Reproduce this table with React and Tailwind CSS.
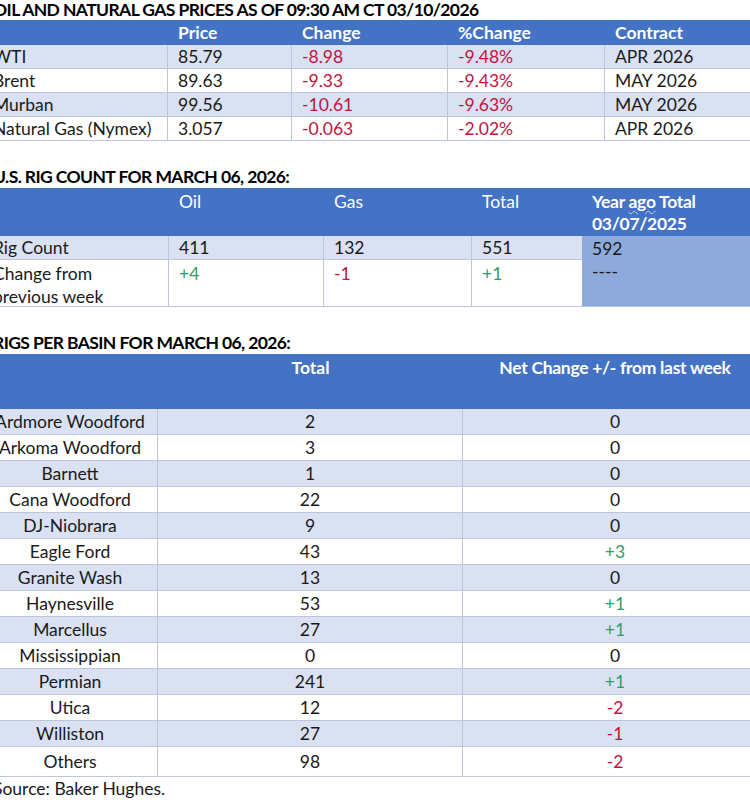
import React from "react";

const prices = [
  { name: "WTI", price: "85.79", change: "-8.98", pct: "-9.48%", contract: "APR 2026" },
  { name: "Brent", price: "89.63", change: "-9.33", pct: "-9.43%", contract: "MAY 2026" },
  { name: "Murban", price: "99.56", change: "-10.61", pct: "-9.63%", contract: "MAY 2026" },
  { name: "Natural Gas (Nymex)", price: "3.057", change: "-0.063", pct: "-2.02%", contract: "APR 2026" },
];

const basins = [
  ["Ardmore Woodford", "2", "0"],
  ["Arkoma Woodford", "3", "0"],
  ["Barnett", "1", "0"],
  ["Cana Woodford", "22", "0"],
  ["DJ-Niobrara", "9", "0"],
  ["Eagle Ford", "43", "+3"],
  ["Granite Wash", "13", "0"],
  ["Haynesville", "53", "+1"],
  ["Marcellus", "27", "+1"],
  ["Mississippian", "0", "0"],
  ["Permian", "241", "+1"],
  ["Utica", "12", "-2"],
  ["Williston", "27", "-1"],
  ["Others", "98", "-2"],
];

function changeColor(v) {
  if (v.startsWith("+")) return "text-[#2f9d6a]";
  if (v.startsWith("-")) return "text-[#c0143c]";
  return "text-[#1a1a1a]";
}

export default function App() {
  return (
    <div className="w-[750px] h-[800px] overflow-hidden bg-white font-['Lato',sans-serif] text-[17.5px] text-[#1a1a1a]">
      <div className="-ml-[17px] w-[784px]">
        {/* Prices */}
        <div className="h-[20px] pl-[10px] text-[17.5px] font-bold leading-[20px] tracking-[-0.6px] text-black">
          OIL AND NATURAL GAS PRICES AS OF 09:30 AM CT 03/10/2026
        </div>
        <div className="grid grid-cols-[185px_124px_156px_157px_162px]">
          <div className="h-[25px] bg-[#4472c4]" />
          {["Price", "Change", "%Change", "Contract"].map((h) => (
            <div key={h} className="flex h-[25px] items-center bg-[#4472c4] pl-[10px] pt-[2px] font-bold text-white">
              {h}
            </div>
          ))}
          {prices.map((r, i) => {
            const bg = i % 2 === 0 ? "bg-[#d9e1f2]" : "bg-white";
            const cell = `flex h-[24px] items-center pl-[10px] pt-[2px] border-b border-[#bcc6d8] ${bg}`;
            return (
              <React.Fragment key={r.name}>
                <div className={`${cell} border-r`}>{r.name}</div>
                <div className={`${cell} border-r`}>{r.price}</div>
                <div className={`${cell} border-r text-[#c0143c]`}>{r.change}</div>
                <div className={`${cell} border-r text-[#c0143c]`}>{r.pct}</div>
                <div className={cell}>{r.contract}</div>
              </React.Fragment>
            );
          })}
        </div>

        {/* Rig count */}
        <div className="flex h-[47px] items-end pb-[1px] pl-[10px] text-[17.5px] font-bold leading-[20px] tracking-[-0.6px] text-black">
          U.S. RIG COUNT FOR MARCH 06, 2026:
        </div>
        <div className="grid grid-cols-[186px_155px_148px_110px_185px]">
          <div className="h-[48px] bg-[#4472c4]" />
          <div className="h-[48px] bg-[#4472c4] pl-[10px] pt-[3px] leading-[22px] text-white">Oil</div>
          <div className="h-[48px] bg-[#4472c4] pl-[10px] pt-[3px] leading-[22px] text-white">Gas</div>
          <div className="h-[48px] bg-[#4472c4] pl-[10px] pt-[3px] leading-[22px] text-white">Total</div>
          <div className="h-[48px] bg-[#4472c4] pl-[10px] pt-[3px] font-bold leading-[22px] tracking-[-0.3px] text-white">
            Year <span className="underline decoration-wavy decoration-[#c6d2ea] decoration-1 underline-offset-2">ago</span> Total
            <br />
            03/07/2025
          </div>

          <div className="flex h-[24px] items-center border-b border-r border-[#bcc6d8] bg-[#d9e1f2] pl-[10px] pt-[2px]">Rig Count</div>
          <div className="flex h-[24px] items-center border-b border-r border-[#bcc6d8] bg-[#d9e1f2] pl-[10px] pt-[2px]">411</div>
          <div className="flex h-[24px] items-center border-b border-r border-[#bcc6d8] bg-[#d9e1f2] pl-[10px] pt-[2px]">132</div>
          <div className="flex h-[24px] items-center border-b border-[#bcc6d8] bg-[#d9e1f2] pl-[10px] pt-[2px]">551</div>
          <div className="row-span-2 border-b border-[#bcc6d8] bg-[#8eaadb] pl-[10px] leading-[23px]">
            <div className="h-[24px] pt-[1px] leading-[24px]">592</div>
            <div>----</div>
          </div>

          <div className="h-[47px] border-b border-r border-[#bcc6d8] pl-[10px] pt-[2px] leading-[23px]">
            Change from
            <br />
            previous week
          </div>
          <div className="h-[47px] border-b border-r border-[#bcc6d8] pl-[10px] pt-[2px] leading-[23px] text-[#2f9d6a]">+4</div>
          <div className="h-[47px] border-b border-r border-[#bcc6d8] pl-[10px] pt-[2px] leading-[23px] text-[#c0143c]">-1</div>
          <div className="h-[47px] border-b border-[#bcc6d8] pl-[10px] pt-[2px] leading-[23px] text-[#2f9d6a]">+1</div>
        </div>

        {/* Rigs per basin */}
        <div className="flex h-[47px] items-end pb-[1px] pl-[10px] text-[17.5px] font-bold leading-[20px] tracking-[-0.6px] text-black">
          RIGS PER BASIN FOR MARCH 06, 2026:
        </div>
        <div className="grid grid-cols-[175px_305px_304px]">
          <div className="h-[55px] bg-[#4472c4]" />
          <div className="h-[55px] bg-[#4472c4] pt-[3px] text-center font-bold leading-[22px] text-white">Total</div>
          <div className="h-[55px] bg-[#4472c4] pt-[3px] text-center font-bold leading-[22px] tracking-[-0.3px] text-white">
            Net Change +/- from last week
          </div>
          {basins.map(([name, total, chg], i) => {
            const bg = i % 2 === 0 ? "bg-[#d9e1f2]" : "bg-white";
            const h = i === basins.length - 1 ? "h-[30px]" : "h-[26px]";
            const cell = `flex ${h} items-center justify-center pt-[1px] border-b border-[#bcc6d8] ${bg}`;
            return (
              <React.Fragment key={name}>
                <div className={`${cell} border-r`}>{name}</div>
                <div className={`${cell} border-r`}>{total}</div>
                <div className={`${cell} ${changeColor(chg)}`}>{chg}</div>
              </React.Fragment>
            );
          })}
        </div>
        <div className="h-[23px] pl-[10px] leading-[23px]">Source: Baker Hughes.</div>
      </div>
    </div>
  );
}
